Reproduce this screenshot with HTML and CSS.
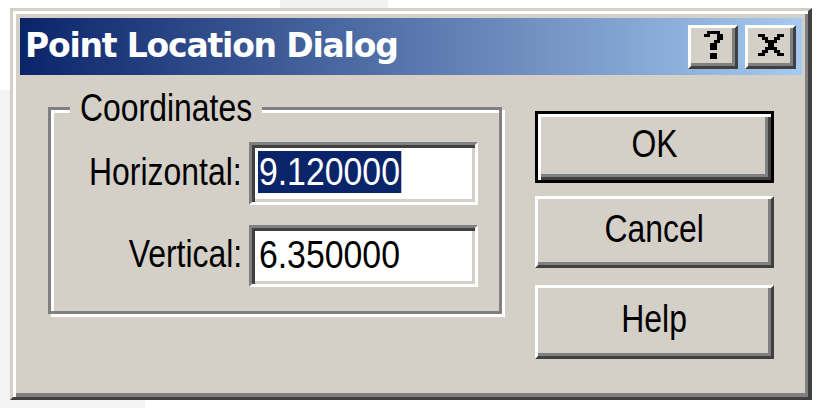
FILE: index.html
```html
<!DOCTYPE html>
<html lang="en">
<head>
<meta charset="utf-8">
<title>Point Location Dialog</title>
<link rel="stylesheet" href="styles.css">
</head>
<body>
<div class="window">
  <div class="titlebar">
    <span class="title">Point Location Dialog</span>
    <div class="tbtns">
      <div class="tbtn tbtn-help">
        <svg class="glyph-help" viewBox="0 0 6 9" width="19" height="28" shape-rendering="crispEdges">
          <rect x="1" y="0" width="4" height="1"/>
          <rect x="0" y="1" width="2" height="1"/><rect x="4" y="1" width="2" height="1"/>
          <rect x="4" y="2" width="2" height="1"/>
          <rect x="3" y="3" width="2" height="1"/>
          <rect x="2" y="4" width="2" height="1"/>
          <rect x="2" y="5" width="2" height="1"/>
          <rect x="2" y="7" width="2" height="2"/>
        </svg>
      </div>
      <div class="tbtn tbtn-close">
        <svg class="glyph-close" viewBox="0 0 8 7" width="26" height="22" shape-rendering="crispEdges">
          <rect x="0" y="0" width="2" height="1"/><rect x="6" y="0" width="2" height="1"/>
          <rect x="1" y="1" width="2" height="1"/><rect x="5" y="1" width="2" height="1"/>
          <rect x="2" y="2" width="4" height="1"/>
          <rect x="3" y="3" width="2" height="1"/>
          <rect x="2" y="4" width="4" height="1"/>
          <rect x="1" y="5" width="2" height="1"/><rect x="5" y="5" width="2" height="1"/>
          <rect x="0" y="6" width="2" height="1"/><rect x="6" y="6" width="2" height="1"/>
        </svg>
      </div>
    </div>
  </div>
  <div class="body">
    <div class="group">
      <div class="legend"><span class="sx sx-left">Coordinates</span></div>
      <div class="lbl"><span class="sx sx-right">Horizontal:</span></div>
      <div class="edit"><span class="val sel">9.120000</span></div>
      <div class="lbl"><span class="sx sx-right">Vertical:</span></div>
      <div class="edit"><span class="val">6.350000</span></div>
    </div>
    <div class="buttons">
      <div class="btn btn-default"><span class="sx">OK</span></div>
      <div class="btn btn-cancel"><span class="sx">Cancel</span></div>
      <div class="btn btn-help"><span class="sx">Help</span></div>
    </div>
  </div>
</div>
</body>
</html>
```

FILE: styles.css
```css
* { box-sizing: border-box; }
html, body { margin: 0; }
body {
  width: 820px;
  height: 408px;
  overflow: hidden;
  padding: 8px 0 0 10px;
  font-family: "Liberation Sans", Arial, sans-serif;
  color: #000;
  background:
    linear-gradient(#f2f2f2, #f2f2f2) 280px 0 / 108px 8px no-repeat,
    linear-gradient(#f3f3f3, #f3f3f3) 0 90px / 10px 318px no-repeat,
    linear-gradient(#f3f3f3, #f3f3f3) 0 400px / 145px 8px no-repeat,
    #fff;
}
.window {
  width: 802px;
  height: 392px;
  background: #d4d0c8;
  border-style: solid;
  border-width: 3px 4px 3px 3px;
  border-color: #d4d0c8 #404040 #404040 #d4d0c8;
  box-shadow: inset 3px 3px 0 #fff, inset -3px -4px 0 #808080;
  padding: 7px 6px 4px 7px;
  display: flex;
  flex-direction: column;
}
.titlebar {
  height: 57px;
  flex: none;
  display: flex;
  align-items: center;
  padding: 0 6px 0 5px;
  background: linear-gradient(90deg, #0a246a 0%, #a6caf0 100%);
}
.title {
  flex: 1;
  color: #fff;
  font-family: "DejaVu Sans", Verdana, sans-serif;
  font-weight: bold;
  font-size: 33px;
  letter-spacing: -1.2px;
  white-space: nowrap;
  padding-bottom: 2px;
}
.tbtns { display: flex; gap: 7px; }
.tbtn {
  width: 50px;
  height: 44px;
  background: #d4d0c8;
  border-style: solid;
  border-width: 3px;
  border-color: #fff #404040 #404040 #fff;
  box-shadow: inset -3px -3px 0 #808080;
  display: flex;
  align-items: center;
  justify-content: center;
  padding-bottom: 3px;
}
.tbtn-close { width: 51px; }
.tbtn svg { display: block; fill: #000; }

.body {
  flex: 1;
  display: flex;
  align-items: flex-start;
  padding: 32px 28px 0 28px;
}
.group {
  position: relative;
  width: 454px;
  height: 207px;
  border: 3px solid #808080;
  box-shadow: inset 3px 3px 0 #fff, 3px 3px 0 #fff;
  padding: 32px 21px 0 0;
  display: grid;
  grid-template-columns: 191px 229px;
  grid-template-rows: 63px 62px;
  column-gap: 7px;
  row-gap: 20px;
  align-content: start;
  font-size: 38px;
}
.legend {
  position: absolute;
  left: 19px;
  top: -22px;
  width: 192px;
  height: 40px;
  line-height: 40px;
  padding-left: 10px;
  background: #d4d0c8;
  white-space: nowrap;
}
.sx { display: inline-block; transform: scaleX(0.84); white-space: nowrap; }
.sx-left { transform-origin: left center; }
.sx-right { transform-origin: right center; }
.lbl {
  justify-self: end;
  display: flex;
  align-items: center;
  line-height: 40px;
  padding-bottom: 4px;
}
.edit {
  background: #fff;
  border-style: solid;
  border-width: 3px;
  border-color: #808080 #fff #fff #808080;
  box-shadow: inset 3px 3px 0 #404040, inset -3px -3px 0 #d4d0c8;
  display: flex;
  align-items: center;
  padding: 0 0 3px 6px;
  overflow: hidden;
}
.val {
  display: inline-block;
  line-height: 42px;
  padding: 0 1px;
  transform: scaleX(0.89);
  transform-origin: left center;
  white-space: nowrap;
}
.sel { background: #0a246a; color: #fff; }

.buttons {
  width: 239px;
  margin-left: 33px;
  margin-top: 4px;
  display: flex;
  flex-direction: column;
}
.btn {
  height: 72px;
  font-size: 38px;
  border-style: solid;
  border-width: 3px;
  border-color: #fff #404040 #404040 #fff;
  box-shadow: inset -3px -3px 0 #808080;
  display: flex;
  align-items: center;
  justify-content: center;
  padding-bottom: 5px;
}
.btn-default {
  border-color: #000;
  box-shadow: inset 3px 3px 0 #fff, inset -3px -3px 0 #404040, inset -6px -6px 0 #808080;
}
.btn-cancel { margin-top: 13px; }
.btn-help { margin-top: 17px; height: 74px; }
```
